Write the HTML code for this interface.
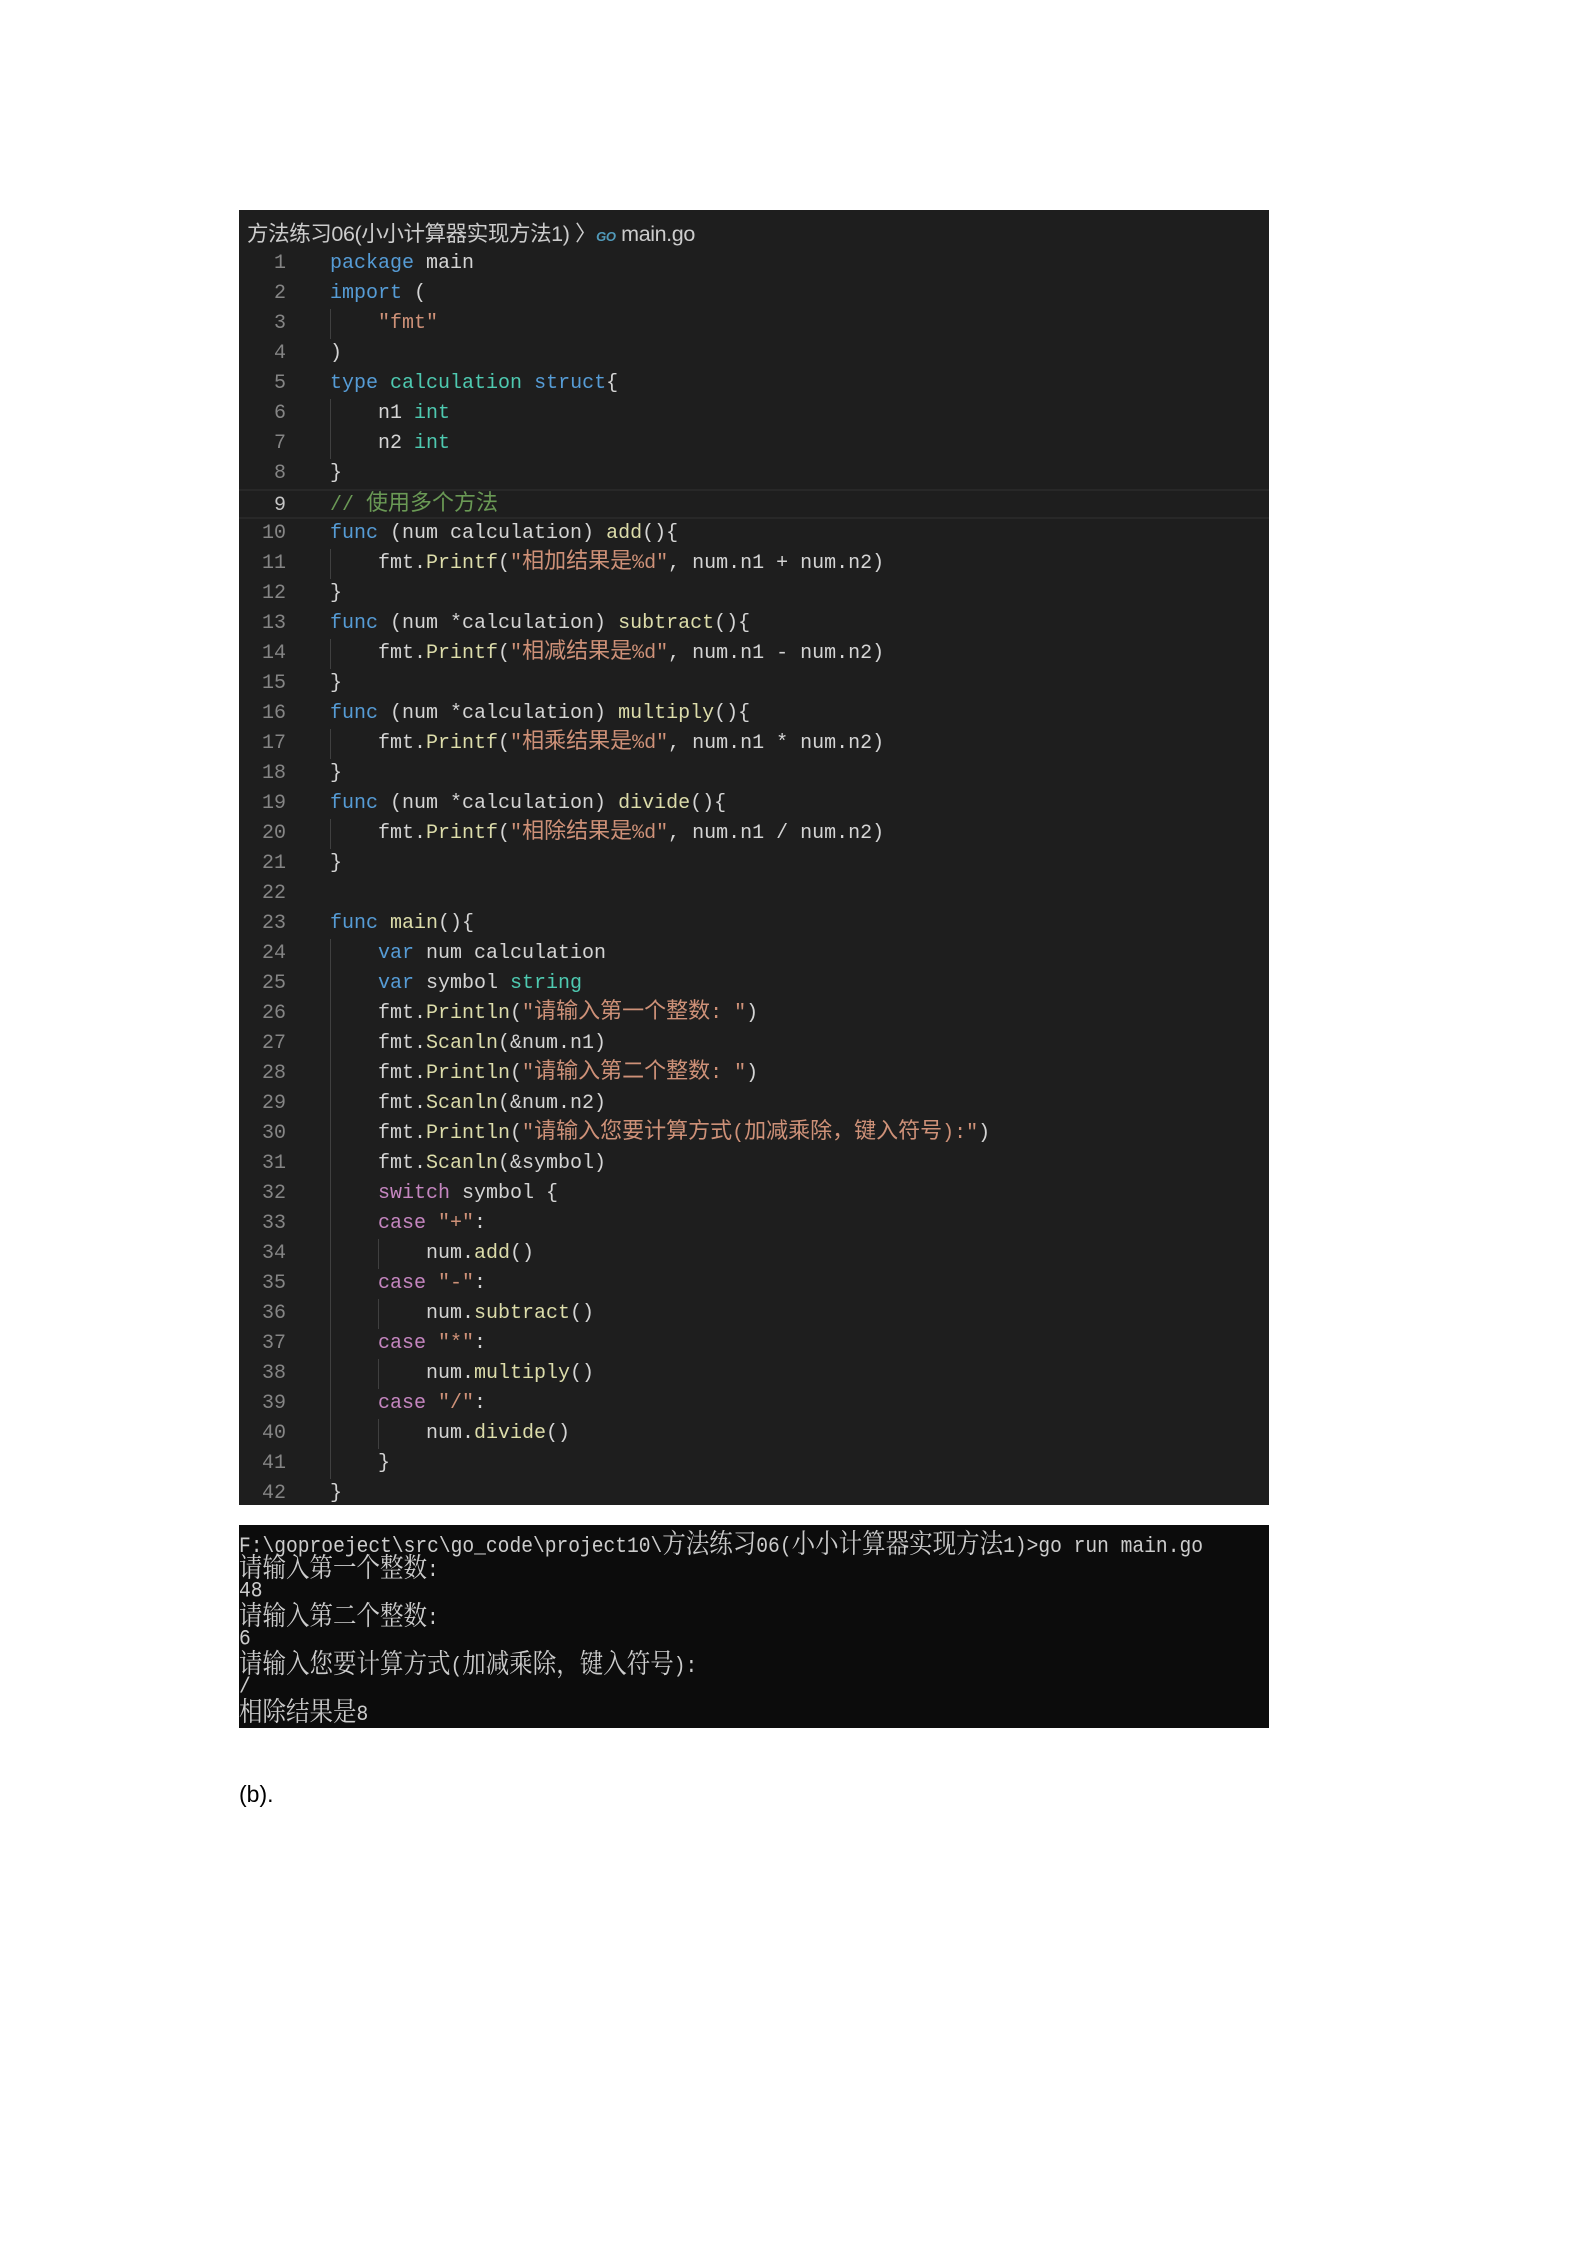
<!DOCTYPE html>
<html><head><meta charset="utf-8"><style>
body{margin:0;width:1587px;height:2245px;background:#fff;position:relative;overflow:hidden}
#ed{position:absolute;left:239px;top:210px;width:1030px;height:1295px;background:#1e1e1e}
#bc{position:absolute;left:8px;top:7px;font:21.5px "Liberation Sans","Noto Sans CJK SC",sans-serif;color:#cccccc;letter-spacing:-0.4px}
.ln{position:absolute;left:0;height:30px;width:1030px;font:20px/30px "Liberation Mono","Noto Sans CJK SC",monospace;color:#d4d4d4;white-space:pre}
.n{position:absolute;right:983px;color:#858585;text-align:right}
.c{position:absolute;left:91px}
.g{position:absolute;top:0;height:30px;width:1px;background:#404040}
.z{font-size:22px;line-height:1}
.k{color:#569cd6}.t{color:#4ec9b0}.f{color:#dcdcaa}.s{color:#ce9178}.m{color:#6a9955}.p{color:#c586c0}
.cur{border-top:2px solid #282828;border-bottom:2px solid #282828;box-sizing:border-box}
#term{position:absolute;left:239px;top:1525px;width:1030px;height:203px;background:#0c0c0c}
.tl{position:absolute;left:0;height:24px;font:19.6px/24px "Liberation Mono","Noto Serif CJK SC",monospace;color:#cccccc;white-space:pre;transform:scaleY(1.15);transform-origin:left top}
.tl .z{font-size:23.5px;line-height:1;font-family:"Noto Serif CJK SC",serif;vertical-align:-1px}
#b{position:absolute;left:239px;top:1781px;font:23px "Liberation Sans",sans-serif;color:#000}
</style></head><body>
<div id="ed">
<div id="bc">方法练习06(小小计算器实现方法1) 〉<span style="color:#519aba;font-size:13px;font-weight:bold;font-style:italic">GO</span> main.go</div>
</div>
<div id="term">
<div class="tl" style="top:4px">F:\goproeject\src\go_code\project10\方法练习06(小小计算器实现方法1)&gt;go run main.go</div>
<div class="tl" style="top:28px">请输入第一个整数:</div>
<div class="tl" style="top:52px">48</div>
<div class="tl" style="top:76px">请输入第二个整数:</div>
<div class="tl" style="top:100px">6</div>
<div class="tl" style="top:124px">请输入您要计算方式(加减乘除，键入符号):</div>
<div class="tl" style="top:148px">/</div>
<div class="tl" style="top:172px">相除结果是8</div>
</div>
<div id="b">(b).</div>
<script>
const L=[
[0,'<span class="k">package</span> main'],
[0,'<span class="k">import</span> ('],
[1,'<span class="s">"fmt"</span>'],
[0,')'],
[0,'<span class="k">type</span> <span class="t">calculation</span> <span class="k">struct</span>{'],
[1,'n1 <span class="t">int</span>'],
[1,'n2 <span class="t">int</span>'],
[0,'}'],
[0,'<span class="m">// 使用多个方法</span>'],
[0,'<span class="k">func</span> (num calculation) <span class="f">add</span>(){'],
[1,'fmt.<span class="f">Printf</span>(<span class="s">"相加结果是%d"</span>, num.n1 + num.n2)'],
[0,'}'],
[0,'<span class="k">func</span> (num *calculation) <span class="f">subtract</span>(){'],
[1,'fmt.<span class="f">Printf</span>(<span class="s">"相减结果是%d"</span>, num.n1 - num.n2)'],
[0,'}'],
[0,'<span class="k">func</span> (num *calculation) <span class="f">multiply</span>(){'],
[1,'fmt.<span class="f">Printf</span>(<span class="s">"相乘结果是%d"</span>, num.n1 * num.n2)'],
[0,'}'],
[0,'<span class="k">func</span> (num *calculation) <span class="f">divide</span>(){'],
[1,'fmt.<span class="f">Printf</span>(<span class="s">"相除结果是%d"</span>, num.n1 / num.n2)'],
[0,'}'],
[0,''],
[0,'<span class="k">func</span> <span class="f">main</span>(){'],
[1,'<span class="k">var</span> num calculation'],
[1,'<span class="k">var</span> symbol <span class="t">string</span>'],
[1,'fmt.<span class="f">Println</span>(<span class="s">"请输入第一个整数: "</span>)'],
[1,'fmt.<span class="f">Scanln</span>(&amp;num.n1)'],
[1,'fmt.<span class="f">Println</span>(<span class="s">"请输入第二个整数: "</span>)'],
[1,'fmt.<span class="f">Scanln</span>(&amp;num.n2)'],
[1,'fmt.<span class="f">Println</span>(<span class="s">"请输入您要计算方式(加减乘除，键入符号):"</span>)'],
[1,'fmt.<span class="f">Scanln</span>(&amp;symbol)'],
[1,'<span class="p">switch</span> symbol {'],
[1,'<span class="p">case</span> <span class="s">"+"</span>:'],
[2,'num.<span class="f">add</span>()'],
[1,'<span class="p">case</span> <span class="s">"-"</span>:'],
[2,'num.<span class="f">subtract</span>()'],
[1,'<span class="p">case</span> <span class="s">"*"</span>:'],
[2,'num.<span class="f">multiply</span>()'],
[1,'<span class="p">case</span> <span class="s">"/"</span>:'],
[2,'num.<span class="f">divide</span>()'],
[1,'}'],
[0,'}']];
const cj=s=>s.replace(/([\u3000-\u9fff\uff00-\uffef]+)/g,'<span class="z">$1</span>');
const ed=document.getElementById('ed');let h='';
L.forEach((l,i)=>{const top=39+i*30;let g='';for(let j=0;j<l[0];j++)g+=`<div class="g" style="left:${91+j*48}px"></div>`;
h+=`<div class="ln${i==8?' cur':''}" style="top:${top}px">${g}<span class="n" style="${i==8?'color:#c6c6c6':''}">${i+1}</span><span class="c" style="left:${91+l[0]*48}px">${cj(l[1])}</span></div>`});
ed.insertAdjacentHTML('beforeend',h);
document.querySelectorAll('.tl').forEach(e=>e.innerHTML=cj(e.innerHTML));
</script>
</body></html>
